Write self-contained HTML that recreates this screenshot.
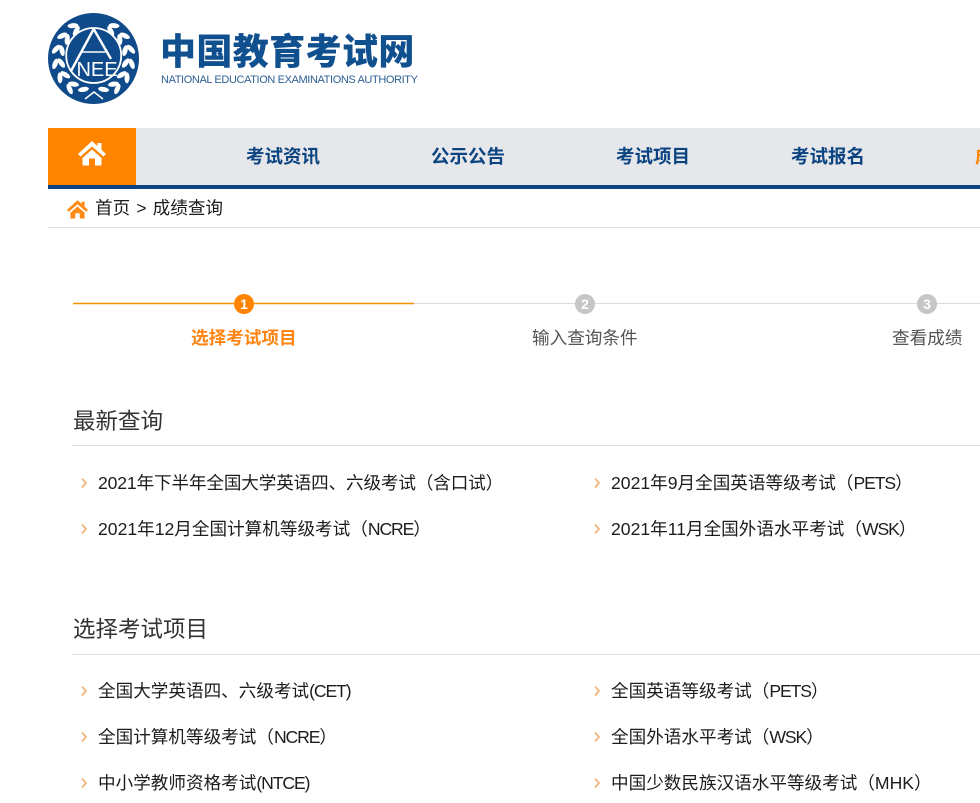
<!DOCTYPE html>
<html lang="zh"><head><meta charset="utf-8"><title>成绩查询</title>
<style>
html,body{margin:0;padding:0;background:#fff;width:980px;height:803px;overflow:hidden}
body{position:relative;font-family:"Liberation Sans","Noto Sans CJK SC",sans-serif;color:#1a1a1a}
.a{position:absolute;white-space:nowrap}
.l{font-size:17.6px;line-height:26px;color:#1c1c1c}
.t{letter-spacing:-1.1px}
.nav{font-size:18.5px;font-weight:700;color:#0b4480;line-height:26px;top:144px}
.h{font-size:22.500px;line-height:32px;color:#333;left:73px}
.r{position:absolute;height:1px;background:#dedede}
.c{position:absolute;width:20px;height:20px;border-radius:50%;color:#fff;font-size:14px;line-height:20px;text-align:center;font-weight:700}
</style></head><body>
<svg class="a" style="left:47px;top:13px" width="93" height="91" viewBox="0 0 93 91">
<defs>
<ellipse id="lo" cx="46.5" cy="6.800" rx="5.500" ry="2.500" fill="#fff" transform="rotate(-28 46.5 6.800)"/>
<ellipse id="li" cx="46.5" cy="13" rx="5.500" ry="2.500" fill="#fff" transform="rotate(28 46.5 13)"/>
<g id="wr">
<use href="#lo" transform="rotate(32 46.5 45.5)"/><use href="#li" transform="rotate(32 46.5 45.5)"/>
<use href="#lo" transform="rotate(54 46.5 45.5)"/><use href="#li" transform="rotate(54 46.5 45.5)"/>
<use href="#lo" transform="rotate(76 46.5 45.5)"/><use href="#li" transform="rotate(76 46.5 45.5)"/>
<use href="#lo" transform="rotate(98 46.5 45.5)"/><use href="#li" transform="rotate(98 46.5 45.5)"/>
<use href="#lo" transform="rotate(120 46.5 45.5)"/><use href="#li" transform="rotate(120 46.5 45.5)"/>
<use href="#lo" transform="rotate(142 46.5 45.5)"/><use href="#li" transform="rotate(142 46.5 45.5)"/>
<use href="#li" transform="rotate(162 46.5 45.5)"/>
</g>
</defs>
<circle cx="46.5" cy="45.5" r="45.5" fill="#0f4a8a"/>
<use href="#wr"/>
<use href="#wr" transform="translate(93,0) scale(-1,1)"/>
<path d="M38 86 L47 79 L56 86" stroke="#fff" stroke-width="1.500" fill="none"/>
<circle cx="46.7" cy="42.500" r="27.500" fill="#0f4a8a" stroke="#fff" stroke-width="1.800"/>
<path d="M46.7 16 L24 58 M46.7 16 L64 46" stroke="#fff" stroke-width="2.400" fill="none"/>
<path d="M35 39 H58.500" stroke="#fff" stroke-width="1.500" fill="none"/>
<text x="50" y="63" font-family="Liberation Sans" font-size="20" fill="#fff" text-anchor="middle">NEE</text>
</svg>
<div class="a" style="left:160px;top:27px;font-size:36px;line-height:50px;font-weight:900;color:#10508f;letter-spacing:.4px">中国教育考试网</div>
<div class="a" style="left:161px;top:72px;font-size:11px;line-height:16px;color:#2f5f94;letter-spacing:-.38px">NATIONAL EDUCATION EXAMINATIONS AUTHORITY</div>

<div class="a" style="left:48px;top:128px;width:932px;height:57px;background:#e5e7eb"></div>
<div class="a" style="left:48px;top:128px;width:88px;height:57px;background:#ff8400"></div>
<div class="a" style="left:48px;top:185px;width:932px;height:4px;background:#0b4480"></div>
<svg class="a" style="left:78px;top:141px" width="28" height="25" viewBox="0 0 28 25"><path d="M14 0 L28 13 L25.500 15.500 L14 5.500 L2.500 15.500 L0 13 Z M19.500 2h4v7.500l-4-3.500Z M14 8.500 L23.500 17 V24.500 H17 V17.500 H11 V24.500 H4.500 V17 Z" fill="#fff"/></svg>
<div class="a nav" style="left:246px">考试资讯</div>
<div class="a nav" style="left:431px">公示公告</div>
<div class="a nav" style="left:616px">考试项目</div>
<div class="a nav" style="left:791px">考试报名</div>
<div class="a nav" style="left:975px;color:#ff8400">成绩查询</div>

<svg class="a" style="left:67px;top:200px" width="21" height="19" viewBox="0 0 28 25"><path d="M14 0 L28 13 L25.500 15.500 L14 5.500 L2.500 15.500 L0 13 Z M19.500 2h4v7.500l-4-3.500Z M14 8.500 L23.500 17 V24.500 H17 V17.500 H11 V24.500 H4.500 V17 Z" fill="#ff8a14"/></svg>
<div class="a l" style="left:95px;top:195px;word-spacing:1.200px">首页 &gt; 成绩查询</div>
<div class="r" style="left:48px;top:227px;width:932px"></div>

<div class="a" style="left:73px;top:303px;width:341px;height:1px;background:#f59300;box-shadow:0 -1px 0 #fde3bd,0 1px 0 #fde3bd"></div>
<div class="r" style="left:414px;top:303px;width:566px;background:#dcdcdc"></div>
<div class="c" style="left:234px;top:294px;background:#ff8400">1</div>
<div class="c" style="left:575px;top:294px;background:#c6c6c6">2</div>
<div class="c" style="left:917px;top:294px;background:#c6c6c6">3</div>
<div class="a l" style="left:191px;top:325px;color:#ff8412;font-weight:700">选择考试项目</div>
<div class="a l" style="left:532px;top:325px;color:#555">输入查询条件</div>
<div class="a l" style="left:892px;top:325px;color:#555">查看成绩</div>

<div class="a h" style="top:406px">最新查询</div>
<div class="r" style="left:72px;top:445px;width:908px"></div>
<svg width="0" height="0" style="position:absolute"><defs><path id="ar" d="M2 1.500 L6 6 L2 10.500" fill="none" stroke="#f2b77c" stroke-width="1.800"/></defs></svg>
<svg class="a" style="left:80px;top:477px" width="8" height="12"><use href="#ar"/></svg>
<div class="a l" style="left:98px;top:470px;letter-spacing:-.14px">2021年下半年全国大学英语四、六级考试（含口试）</div>
<svg class="a" style="left:593px;top:477px" width="8" height="12"><use href="#ar"/></svg>
<div class="a l" style="left:611px;top:470px">2021年9月全国英语等级考试（<span class="t">PETS</span>）</div>
<svg class="a" style="left:80px;top:523px" width="8" height="12"><use href="#ar"/></svg>
<div class="a l" style="left:98px;top:516px">2021年12月全国计算机等级考试（<span class="t">NCRE</span>）</div>
<svg class="a" style="left:593px;top:523px" width="8" height="12"><use href="#ar"/></svg>
<div class="a l" style="left:611px;top:516px">2021年11月全国外语水平考试（<span class="t">WSK</span>）</div>

<div class="a h" style="top:614px">选择考试项目</div>
<div class="r" style="left:72px;top:654px;width:908px"></div>
<svg class="a" style="left:80px;top:685px" width="8" height="12"><use href="#ar"/></svg>
<div class="a l" style="left:98px;top:678px">全国大学英语四、六级考试<span class="t">(CET)</span></div>
<svg class="a" style="left:593px;top:685px" width="8" height="12"><use href="#ar"/></svg>
<div class="a l" style="left:611px;top:678px">全国英语等级考试（<span class="t">PETS</span>）</div>
<svg class="a" style="left:80px;top:731px" width="8" height="12"><use href="#ar"/></svg>
<div class="a l" style="left:98px;top:724px">全国计算机等级考试（<span class="t">NCRE</span>）</div>
<svg class="a" style="left:593px;top:731px" width="8" height="12"><use href="#ar"/></svg>
<div class="a l" style="left:611px;top:724px">全国外语水平考试（<span class="t">WSK</span>）</div>
<svg class="a" style="left:80px;top:777px" width="8" height="12"><use href="#ar"/></svg>
<div class="a l" style="left:98px;top:770px">中小学教师资格考试<span class="t">(NTCE)</span></div>
<svg class="a" style="left:593px;top:777px" width="8" height="12"><use href="#ar"/></svg>
<div class="a l" style="left:611px;top:770px">中国少数民族汉语水平等级考试（MHK）</div>
</body></html>
